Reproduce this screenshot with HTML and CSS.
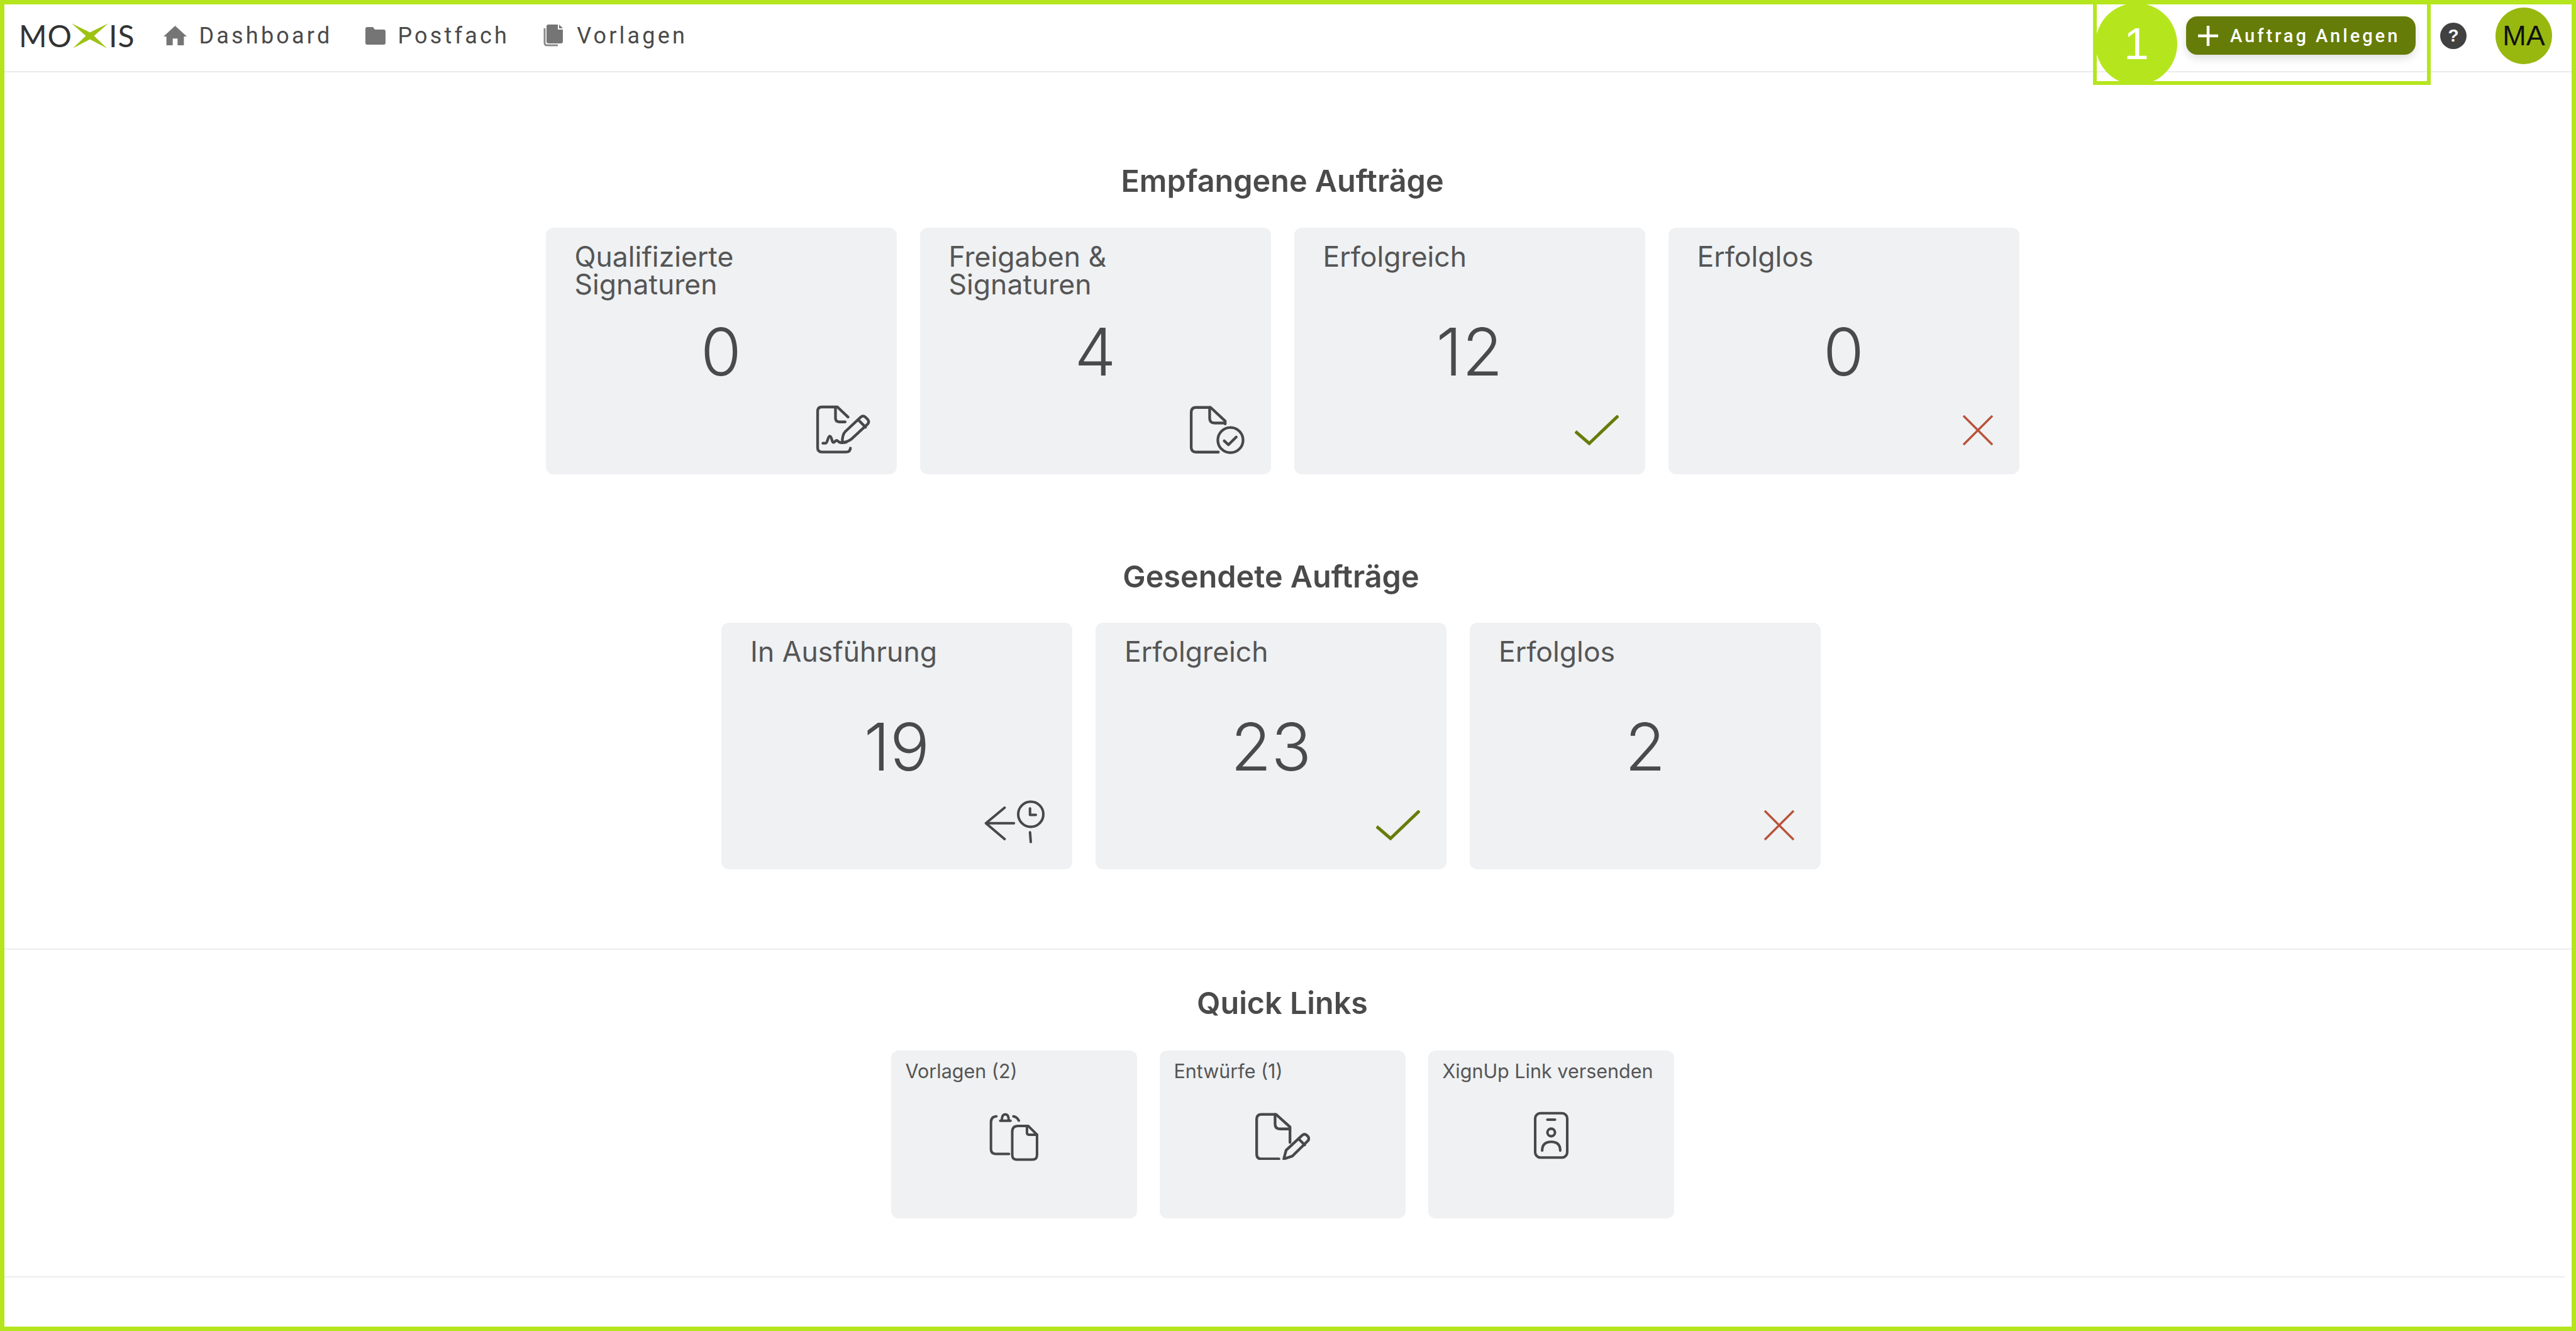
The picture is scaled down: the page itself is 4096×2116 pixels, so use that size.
FILE: index.html
```html
<!DOCTYPE html>
<html lang="de">
<head>
<meta charset="utf-8">
<title>MOXIS Dashboard</title>
<link rel="stylesheet" href="styles.css">
</head>
<body>
<div class="page">
  <header class="topbar">
    <div class="logo">
      <span>MO</span>
      <svg class="logo-x" viewBox="0 0 62 42"><path d="M0 0 L31 15 L62 0 L38 21 L60 42 L31 27 L2 42 L24 21 Z" fill="#9dc213"/></svg>
      <span class="logo-end">IS</span>
    </div>
    <nav class="nav">
      <a class="nav-item"><svg class="nav-icon" width="37" height="31" viewBox="0 0 24 20"><path d="M12 0 L24 11 H21 V20 H14.5 V13 H9.5 V20 H3 V11 H0 Z"/></svg>Dashboard</a>
      <a class="nav-item"><svg class="nav-icon" width="32" height="28" viewBox="0 0 32 28"><path d="M3 0 H12 L15 4 H29 Q32 4 32 7 V25 Q32 28 29 28 H3 Q0 28 0 25 V3 Q0 0 3 0 Z"/></svg>Postfach</a>
      <a class="nav-item"><svg class="nav-icon" width="35" height="35" viewBox="0 0 35 35"><path d="M9 0 H24 V8 H32 V27 Q32 30 29 30 H9 Q6 30 6 27 V3 Q6 0 9 0 Z"/><path d="M26 0 L32 6 H26 Z"/><path d="M3 6 V29 Q3 33 7 33 H24" fill="none" stroke="#8a8a8a" stroke-width="3"/></svg>Vorlagen</a>
    </nav>
    <div class="actions">
      <button class="create-btn"><svg width="32" height="32" viewBox="0 0 32 32"><path d="M16 0 V32 M0 16 H32" stroke="#fff" stroke-width="4.5"/></svg>Auftrag Anlegen</button>
      <span class="help">?</span>
      <span class="avatar">MA</span>
    </div>
  </header>

  <main class="main">
    <section class="group group-first">
      <h2 class="heading">Empfangene Aufträge</h2>
      <div class="row">
        <article class="card">
          <h3 class="card-title">Qualifizierte Signaturen</h3>
          <div class="card-num">0</div>
          <svg class="card-icon" width="87" height="79" viewBox="168 45 282 256" fill="none" stroke="#484848" stroke-width="14" stroke-linecap="round" stroke-linejoin="round"><path d="M347 270 Q345 290 325 290 H200 Q178 290 178 268 V80 Q178 58 200 58 H280 L335 110"/><path d="M270 60 V115 Q270 135 290 135 H320"/><path d="M205 245 H218 C230 245 230 208 241 208 C252 208 250 245 262 240 C270 236 272 226 280 232 C290 242 300 245 325 240"/><path d="M305 240 C305 215 310 195 320 185 L400 110 Q412 100 424 110 L436 122 Q446 134 436 146 L350 225 Q330 240 305 240 Z"/><path d="M388 125 L425 162"/></svg>
        </article>
        <article class="card">
          <h3 class="card-title">Freigaben &amp; Signaturen</h3>
          <div class="card-num">4</div>
          <svg class="card-icon" width="88" height="79" viewBox="50 45 285 255" fill="none" stroke="#484848" stroke-width="14" stroke-linecap="round" stroke-linejoin="round"><path d="M200 290 H85 Q60 290 60 265 V85 Q60 60 85 60 H160 L235 130 V145"/><path d="M155 60 V115 Q155 140 180 140 H235"/><circle cx="262" cy="228" r="65"/><path d="M230 232 L252 252 L292 212"/></svg>
        </article>
        <article class="card">
          <h3 class="card-title">Erfolgreich</h3>
          <div class="card-num">12</div>
          <svg class="card-icon card-mark" width="70" height="48" viewBox="0 0 70 48" fill="none" stroke="#667c08" stroke-width="5"><path d="M1 26 L23 45 L69 1"/></svg>
        </article>
        <article class="card">
          <h3 class="card-title">Erfolglos</h3>
          <div class="card-num">0</div>
          <svg class="card-icon card-mark" width="48" height="48" viewBox="0 0 48 48" fill="none" stroke="#b9533a" stroke-width="3.5"><path d="M1 1 L47 47 M47 1 L1 47"/></svg>
        </article>
      </div>
    </section>

    <section class="group group-second">
      <h2 class="heading">Gesendete Aufträge</h2>
      <div class="row">
        <article class="card">
          <h3 class="card-title">In Ausführung</h3>
          <div class="card-num">19</div>
          <svg class="card-icon card-clock" width="100" height="70" viewBox="135 220 325 225" fill="none" stroke="#484848" stroke-width="13" stroke-linecap="round" stroke-linejoin="round"><path d="M295 338 H150 M247 258 L150 338 L247 420"/><circle cx="382" cy="292" r="65"/><path d="M378 262 V295 H408"/><path d="M378 385 L382 435"/></svg>
        </article>
        <article class="card">
          <h3 class="card-title">Erfolgreich</h3>
          <div class="card-num">23</div>
          <svg class="card-icon card-mark" width="70" height="48" viewBox="0 0 70 48" fill="none" stroke="#667c08" stroke-width="5"><path d="M1 26 L23 45 L69 1"/></svg>
        </article>
        <article class="card">
          <h3 class="card-title">Erfolglos</h3>
          <div class="card-num">2</div>
          <svg class="card-icon card-mark" width="48" height="48" viewBox="0 0 48 48" fill="none" stroke="#b9533a" stroke-width="3.5"><path d="M1 1 L47 47 M47 1 L1 47"/></svg>
        </article>
      </div>
    </section>

    <section class="group group-quick">
      <h2 class="heading">Quick Links</h2>
      <div class="row row-quick">
        <article class="qcard">
          <h3 class="qcard-title">Vorlagen (2)</h3>
          <svg class="qcard-icon" width="80" height="80" viewBox="100 135 260 260" fill="none" stroke="#484848" stroke-width="13" stroke-linecap="round" stroke-linejoin="round"><path d="M140 160 Q112 162 112 190 V330 Q112 354 136 354 H205"/><path d="M160 183 H213 M168 183 Q168 150 186 150 Q204 150 204 183"/><path d="M228 160 Q246 163 256 182"/><path d="M222 240 Q222 210 252 210 H305 L350 255 V360 Q350 384 326 384 H246 Q222 384 222 360 Z"/><path d="M298 212 V245 Q298 255 308 255 H350"/></svg>
        </article>
        <article class="qcard">
          <h3 class="qcard-title">Entwürfe (1)</h3>
          <svg class="qcard-icon" width="88" height="77" viewBox="60 45 285 250" fill="none" stroke="#484848" stroke-width="14" stroke-linecap="round" stroke-linejoin="round"><path d="M185 290 H95 Q70 290 70 265 V85 Q70 60 95 60 H170 L242 125 V205"/><path d="M165 60 V110 Q165 135 190 135 H242"/><path d="M210 290 L222 245 L305 168 Q317 158 329 168 L334 173 Q344 185 334 197 L255 275 Z"/><path d="M288 188 L318 218"/></svg>
        </article>
        <article class="qcard">
          <h3 class="qcard-title">XignUp Link versenden</h3>
          <svg class="qcard-icon" width="57" height="76" viewBox="0 0 61 82" fill="none" stroke="#484848" stroke-width="4.4" stroke-linecap="round"><rect x="3" y="3" width="55" height="76" rx="9"/><path d="M24 14 H37"/><circle cx="30.5" cy="36" r="6.5"/><path d="M15 67 Q15 52 30.5 52 Q46 52 46 67"/></svg>
        </article>
      </div>
    </section>
    <div class="bottom-space"></div>
  </main>

  <div class="frame"></div>
  <div class="callout-box"></div>
  <div class="callout-num">1</div>
</div>
</body>
</html>
```
FILE: styles.css
```css
* { box-sizing: border-box; }
html, body { margin: 0; padding: 0; background: #fff; }
.page {
  position: relative;
  width: 4096px;
  height: 2116px;
  overflow: hidden;
  font-family: "Inter", "Liberation Sans", sans-serif;
  color: #4a4a4a;
}
.topbar {
  display: flex;
  align-items: center;
  height: 115px;
  padding: 0 38px 0 30px;
  border-bottom: 2px solid #ececec;
  font-family: "Roboto", "Liberation Sans", sans-serif;
}
.logo {
  display: flex;
  align-items: center;
  font-family: "Lato", sans-serif;
  font-weight: 400;
  font-size: 48px;
  line-height: 1;
  letter-spacing: 1px;
  color: #333;
}
.logo-x { width: 58px; height: 40px; margin: 0 0 0 -1px; }
.logo-end { margin-left: 1px; }
.nav { display: flex; align-items: center; gap: 53px; margin-left: 46px; }
.nav-item {
  display: flex;
  align-items: center;
  gap: 19px;
  font-size: 36px;
  letter-spacing: 4.2px;
  color: #4a4a4a;
}
.nav-icon { fill: #757575; }
.actions { display: flex; align-items: center; margin-left: auto; }
.create-btn {
  display: flex;
  align-items: center;
  gap: 19px;
  width: 365px;
  height: 61px;
  padding: 0 0 0 19px;
  border: 0;
  border-radius: 18px;
  background: #667c08;
  color: #fff;
  font-family: "Roboto", "Liberation Sans", sans-serif;
  font-size: 29px;
  font-weight: 500;
  letter-spacing: 4px;
  box-shadow: 0 6px 14px rgba(0,0,0,.12);
}
.help {
  display: flex;
  align-items: center;
  justify-content: center;
  width: 42px;
  height: 42px;
  margin-left: 39px;
  border-radius: 50%;
  background: #414141;
  color: #fff;
  font-family: "Liberation Sans", sans-serif;
  font-weight: 700;
  font-size: 28px;
}
.avatar {
  display: flex;
  align-items: center;
  justify-content: center;
  width: 90px;
  height: 90px;
  margin-left: 46px;
  border-radius: 50%;
  background: #98b80f;
  color: #111;
  font-family: "Liberation Sans", sans-serif;
  font-size: 45px;
}
.main { padding-right: 18px; }
.group { display: flex; flex-direction: column; align-items: center; }
.group-first { padding-top: 143px; }
.group-second { padding-top: 133px; padding-right: 36px; }
.group-quick {
  margin: 126px -18px 0 0;
  padding: 55px 18px 0 0;
  border-top: 2px solid #ececec;
}
.heading {
  margin: 0 0 44px;
  font-size: 48.5px;
  line-height: 60px;
  font-weight: 600;
  color: #4a4a4a;
}
.group-second .heading { margin-bottom: 43px; }
.group-quick .heading { margin-bottom: 45px; }
.row { display: flex; gap: 37px; }
.row-quick { gap: 36px; }
.card {
  display: grid;
  width: 558px;
  height: 392px;
  border-radius: 12px;
  background: #eff1f3;
}
.card > * { grid-area: 1 / 1; }
.card-title {
  align-self: start;
  margin: 0;
  padding: 24px 200px 0 46px;
  font-size: 44.5px;
  line-height: 44px;
  font-weight: 400;
  color: #555;
}
.card-num {
  place-self: center;
  font-size: 105px;
  line-height: 1;
  font-weight: 350;
  color: #4a4a4a;
}
.card-icon { align-self: end; justify-self: end; margin: 0 42px 32px 0; }
.card-mark { margin-bottom: 46px; }
.card-clock { margin-bottom: 40px; }
.qcard {
  display: flex;
  flex-direction: column;
  align-items: stretch;
  width: 391px;
  height: 267px;
  border-radius: 12px;
  background: #eff1f3;
}
.qcard-title {
  margin: 0;
  padding: 15px 0 0 23px;
  font-size: 30.5px;
  line-height: 36px;
  font-weight: 400;
  color: #555;
}
.qcard-icon { align-self: center; margin-top: 46px; }
.bottom-space { height: 94px; border-bottom: 2px solid #ececec; }
.frame {
  position: absolute;
  inset: 0;
  border: 7px solid #b5e61d;
  pointer-events: none;
}
.callout-box {
  position: absolute;
  left: 3328px;
  top: 0;
  width: 537px;
  height: 135px;
  border: 6.5px solid #b5e61d;
}
.callout-num {
  position: absolute;
  left: 3332px;
  top: 5px;
  width: 130px;
  height: 130px;
  border-radius: 50%;
  background: #b5e61d;
  color: #fff;
  font-family: "Liberation Sans", sans-serif;
  font-size: 71px;
  line-height: 130px;
  text-align: center;
}
```
